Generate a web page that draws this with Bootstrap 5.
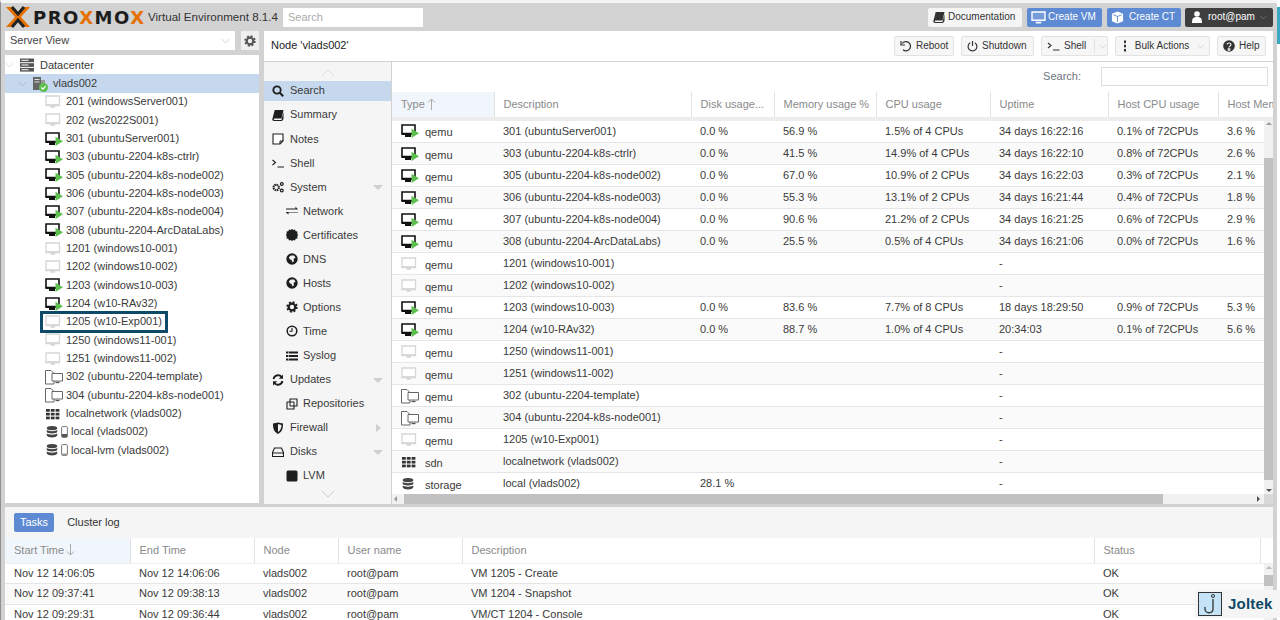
<!doctype html>
<html lang="en"><head><meta charset="utf-8"><title>Proxmox Virtual Environment</title>
<link rel="stylesheet" href="https://cdn.jsdelivr.net/npm/bootstrap@5.3.0/dist/css/bootstrap.min.css">
<style>
html,body{height:620px;overflow:hidden}
body{background:#fff;font-family:"Liberation Sans",Arial,sans-serif;font-size:11px;color:#3a3a3a;line-height:1.2}
.pg{width:1277px;height:620px;background:#d2d2d2;border-top:3px solid #f4f4f4;border-left:1px solid #8f8f8f;position:relative}
svg{flex:none}
.hdr{height:28px;padding:0 4px 0 4px;gap:5px}
.lgx{width:26px;height:22px}
.lgt{font:bold 18px "DejaVu Sans",sans-serif;letter-spacing:1.5px;color:#1d1d1d;width:115px;white-space:nowrap;overflow:hidden;margin-left:-3px}
.lgt span{color:#e57000}
.ver{font-size:11.6px;color:#333;white-space:nowrap;width:130px;margin-left:-5px}
.srch{width:140px;height:19px;border:0;border-radius:0;padding:0 5px;font-size:11px;background:#fff}
.srch::placeholder{color:#aaa}
.hb{height:19px;font-size:10px;border:0;border-radius:2px;display:inline-flex;align-items:center;white-space:nowrap;color:#fff;line-height:1;--bs-btn-hover-color:#fff}
.hb-l{background:#f5f5f5;color:#333;width:94px;padding:0 0 0 5px;gap:3px}
.hb-b{background:#5d8ad2;width:75px;padding:0 0 0 4px;gap:2px}
.hb-b2{width:74px;gap:5px;margin-right:-1px}
.hb-d{background:#3e3e3e;width:88px;padding:0 7px 0 6px;gap:5px}
.cdim{color:#bbb}.cdim2{color:#999}.cdim3{color:#ccc}.cdim4{color:#aaa}.cdim5{color:#ddd}
.side{width:254px;margin-left:4px;flex:none}
.cmb{height:19px;background:#fff;width:230px;padding:0 5px;color:#444}
.gearb{width:18px;height:19px;background:#efefef;margin-left:6px}
.tree{margin-top:5px;height:448px;background:#fff;padding-top:1px}
.tr{height:18.35px;white-space:nowrap;color:#3a3a3a}
.tr.sel{background:#c5d8ee}
.tr svg{width:18px;height:16px}
.t0{padding-left:14px;gap:5px}
.t1{padding-left:27px;gap:5px}
.t0 svg,.t1 svg{width:16px}
.t2{padding-left:40px;gap:3px}
.t2.tst{gap:2px}
.tr svg.dbi{width:14px;height:14px}
.tr svg.phi{width:7px;height:12px;margin-right:1px}
.tr svg.tog{width:9px;height:6px;margin-left:-9px;margin-right:-5px;position:relative;left:-5px}
.hlbox{outline:3px solid #0c4a68;display:inline-flex;align-items:center;gap:3px;padding:0 3px 0 2px;margin-left:-2px;height:16px}
.mn{margin-left:5px;flex:1;min-width:0;margin-right:4px}
.ttl{height:30px;background:#fff;padding:0 7px 0 7px;margin-bottom:1px;color:#222}
.tb{height:20px;border:1px solid #e2e2e2;background:#f6f6f6;color:#333;border-radius:2px;font-size:10px;padding:0 0 0 5px;display:inline-flex;align-items:center;gap:4px;white-space:nowrap;line-height:1}
.tbrow{gap:7px}
.w60{width:60px}.w73{width:73px}.w67{width:67px}.w95{width:95px}.w49{width:49px}
.sep{height:14px}
.dots{margin-left:1px}
.nv{width:127px;flex:none;background:#f5f5f5;margin-right:1px;height:442px;padding-top:17px;position:relative}
.ni{height:24.05px;padding-left:8px;white-space:nowrap;gap:6px;position:relative;color:#3a3a3a}
.ni.sub{padding-left:22px;gap:5px}
.ni svg{width:12px;height:12px;color:#1e1e1e}
.ni.on::before{content:"";position:absolute;left:0;right:0;top:2px;bottom:2px;background:#c5d8ee}
.ni>*{position:relative}
.nar{position:absolute!important;right:8px;top:10px;width:0;height:0;border:5px solid transparent;border-top:5px solid #cfcfcf;border-bottom:0}
.nar2{border:4px solid transparent;border-left:5px solid #cfcfcf;border-right:0;top:8px;right:10px}
.chv{position:absolute;left:57px;width:14px;height:8px}
.chv-t{top:7px}.chv-b{bottom:6px}
.gr{min-width:0;background:#fff;height:442px}
.gt{height:30px;padding:0 5px 0 0;gap:20px;background:#fff}
.gt .form-control{width:167px;height:19px;border:1px solid #ddd;border-radius:0;padding:0}
.tw{overflow:hidden}
.gbody{min-height:0}
.gtab{table-layout:fixed;border-collapse:collapse;margin:0;color:#3a3a3a;font-size:11px}
.gw{width:900px}
.gw col:nth-child(1){width:102px}.gw col:nth-child(2){width:197px}.gw col:nth-child(3){width:83px}.gw col:nth-child(4){width:102px}.gw col:nth-child(5){width:114px}.gw col:nth-child(6){width:118px}.gw col:nth-child(7){width:110px}.gw col:nth-child(8){width:74px}
.gb{width:100%}
.gb col:nth-child(1){width:125px}.gb col:nth-child(2){width:124px}.gb col:nth-child(3){width:84px}.gb col:nth-child(4){width:124px}.gb col:nth-child(5){width:632px}
.hg2 col:nth-child(6){width:166px}
.gtab td,.gtab th{padding:0 0 0 9px;white-space:nowrap;overflow:hidden;border:0;vertical-align:middle;background:transparent;box-shadow:none;color:inherit}
.gtab thead th{font-weight:400;color:#8a8a8a;height:25px;border-right:1px solid #e3e3e3;background:#fff}
.gtab thead th.nob{border-right:0}
.gtab th.srt{background:#f1f6fc}
.gtab tbody tr{border-bottom:1px solid #e6e6e6;background:#fff}
.gtab tbody tr:nth-child(even){background:#fafafa}
.g1 tbody tr{height:22px}
.g1 tbody td:first-child svg{width:18px;height:16px;margin-right:6px;vertical-align:-3px}
.g1 tbody td:first-child svg.dbg{width:14px;margin-right:10px}
.sa{width:9px;height:12px;vertical-align:-2px;margin-left:2px;color:#aaa}
.ghead{border-bottom:4px solid #ececec;height:29px}
.vs{width:9px;flex:none;background:#f1f1f1;position:relative}
.vth{position:absolute;left:0;right:0;background:#c1c1c1}
.vth1{top:37px;height:322px}
.vth2{top:11px;height:11px}
.sar{position:absolute;left:2px;width:0;height:0;border:3px solid transparent}
.sar-u{top:1px;border-bottom-color:#999;border-top:0}
.sar-u2{top:2px;border-bottom-color:#bbb;border-top:0}
.sar-d{bottom:2px;border-top-color:#555;border-bottom:0}
.sar-l{left:2px;top:2px;border-right-color:#999;border-left:0}
.sar-r{left:auto;right:4px;top:2px;border-left-color:#555;border-right:0}
.hs{height:10px;background:#f1f1f1;position:relative;border-right:9px solid #d8d8d8}
.hth{position:absolute;left:12px;width:759px;top:0;bottom:0;background:#c1c1c1}
.bot{margin:3px 4px 0 4px;height:113px;background:#f5f5f5}
.btabs{height:31px;padding:0 9px;gap:7px}
.bt{height:19px;padding:0 6px;background:#5d8ad2;color:#fff;border:0;border-radius:2px;font-size:11px;line-height:1}
.bt2{color:#333;background:transparent}
.hg2 thead th{height:25px;border-bottom:1px solid #eee}
.bg2{background:#fff;height:57px}
.g2 tbody tr{height:20.3px}
.wm{position:absolute;right:-3px;bottom:2px;width:85px;height:28px;background:#f5f5f5;padding-left:3px;gap:6px}
.wm svg{width:24px;height:24px}
.wm b{font-size:15px;color:#0f4a68;letter-spacing:.2px}
.teal{position:absolute;left:1276px;top:4px;width:3px;height:37px;background:#39a9c4}
</style></head><body>
<svg width="0" height="0" class="position-absolute">
<defs>
<symbol id="vr" viewBox="0 0 18 16"><path d="M1 2h13v8.500H1z" fill="#fff" stroke="#111" stroke-width="1.600"/><path d="M.500 10h14v2H.500zM4 12h6v2H4z" fill="#111"/><path d="M10.500 5.800 18 10.300l-7.500 4.600z" fill="#5cbf4e"/></symbol>
<symbol id="vo" viewBox="0 0 18 16"><path d="M1 2h13.500v9H1z" fill="#fff" stroke="#d6d6d6" stroke-width="1.300"/><path d="M.500 10.500h14.500v1.800H.500zM5.500 12h4.500v1.800H5.500z" fill="#d6d6d6"/></symbol>
<symbol id="vt" viewBox="0 0 18 16"><path d="M.500 1.500h5.500L9 4.500V15H.500z" fill="#fff" stroke="#666" stroke-width="1"/><path d="M7 4.500h10.500v7.500H7z" fill="#fff" stroke="#666" stroke-width="1"/><path d="M10.500 13.500h4" stroke="#555" stroke-width="1.300"/></symbol>
<symbol id="sd" viewBox="0 0 18 16"><g fill="#333"><rect x="1" y="3" width="3.800" height="2.700"/><rect x="5.800" y="3" width="3.800" height="2.700"/><rect x="10.600" y="3" width="3.800" height="2.700"/><rect x="1" y="6.800" width="3.800" height="2.700"/><rect x="5.800" y="6.800" width="3.800" height="2.700"/><rect x="10.600" y="6.800" width="3.800" height="2.700"/><rect x="1" y="10.600" width="3.800" height="2.700"/><rect x="5.800" y="10.600" width="3.800" height="2.700"/><rect x="10.600" y="10.600" width="3.800" height="2.700"/></g></symbol>
<symbol id="db" viewBox="0 0 16 16"><g fill="#444"><ellipse cx="8" cy="3.500" rx="6" ry="2.500"/><path d="M2 5.500c1.500 2.200 10.500 2.200 12 0v2.500c-1.500 2.200-10.500 2.200-12 0zM2 9.500c1.500 2.200 10.500 2.200 12 0V12c-1 3-11 3-12 0z"/></g></symbol>
<symbol id="ph" viewBox="0 0 7 12"><rect x=".6" y=".6" width="5.800" height="10.800" rx="1" fill="#fff" stroke="#777"/><path d="M1 8h5v3H1z" fill="#555"/></symbol>
<symbol id="ph2" viewBox="0 0 7 12"><rect x=".6" y=".6" width="5.800" height="10.800" rx="1" fill="#fff" stroke="#777"/><path d="M1 9.500h5V11H1z" fill="#999"/></symbol>
<symbol id="dc" viewBox="0 0 16 16"><g fill="#555"><rect x="1" y="1.500" width="14" height="3.700"/><rect x="1" y="6.200" width="14" height="3.700"/><rect x="1" y="10.900" width="14" height="3.700"/></g><g fill="#fff"><rect x="2.500" y="2.800" width="7" height="1"/><rect x="2.500" y="7.500" width="7" height="1"/><rect x="2.500" y="12.200" width="7" height="1"/></g></symbol>
<symbol id="nd" viewBox="0 0 16 16"><path d="M1 1h8v13H1z" fill="#666"/><path d="M9 4h4v7H9z" fill="#999"/><path d="M2.500 3h5v1h-5zM2.500 5.500h5v1h-5z" fill="#ddd"/><circle cx="11.500" cy="11.500" r="4.500" fill="#5cbf4e"/><path d="m9.300 11.500 1.600 1.600 2.700-2.900" fill="none" stroke="#fff" stroke-width="1.200"/></symbol>
<symbol id="ch" viewBox="0 0 14 8"><path d="M1 1l6 6 6-6" fill="none" stroke="currentColor" stroke-width="1"/></symbol>
<symbol id="cu" viewBox="0 0 14 8"><path d="M1 7l6-6 6 6" fill="none" stroke="currentColor" stroke-width="1"/></symbol>
<symbol id="ar" viewBox="0 0 9 12"><path d="M4.500 12V1M1 4.500 4.500 1 8 4.500" fill="none" stroke="currentColor"/></symbol>
<symbol id="ard" viewBox="0 0 9 12"><path d="M4.500 0v11M1 7.500 4.500 11 8 7.500" fill="none" stroke="currentColor"/></symbol>
<symbol id="is" viewBox="0 0 12 12"><circle cx="5" cy="5" r="3.700" fill="none" stroke="currentColor" stroke-width="1.800"/><path d="m7.800 7.800 3.400 3.400" stroke="currentColor" stroke-width="2"/></symbol>
<symbol id="ib" viewBox="0 0 12 12"><path d="M2.700 1H11.500L9.500 9.500H2.500C1.500 9.500 1.500 11 2.500 11H9.500L11.500 3v7L10 12H2C.5 12 0 10.500.5 9.500z" fill="currentColor"/></symbol>
<symbol id="in" viewBox="0 0 12 12"><path d="M1 1h10v7l-3 3H1z" fill="#fff" stroke="currentColor" stroke-width="1.100"/><path d="M8 11V8h3" fill="none" stroke="currentColor"/></symbol>
<symbol id="ish" viewBox="0 0 12 12"><path d="M.5 3l3 2.500-3 2.500M5.500 10H12" fill="none" stroke="currentColor" stroke-width="1.100"/></symbol>
<symbol id="ics" viewBox="0 0 12 12"><circle cx="4.200" cy="6.500" r="2.700" fill="none" stroke="currentColor" stroke-width="2" stroke-dasharray="1.500 .6"/><circle cx="9.800" cy="3" r="1.400" fill="none" stroke="currentColor" stroke-width="1.200"/><circle cx="9.800" cy="9.500" r="1.400" fill="none" stroke="currentColor" stroke-width="1.200"/></symbol>
<symbol id="ix" viewBox="0 0 12 12"><path d="M0 3.500h9.500V1.500L12 4.500H0zM12 7.500H2.500v2L0 7.500V7h12z" fill="currentColor"/></symbol>
<symbol id="ic" viewBox="0 0 12 12"><path d="M6 0l1.400 1.100L9 .6l.7 1.700 1.800.3-.2 1.800L12 6l-.7 1.600.2 1.800-1.800.3L9 11.400l-1.600-.5L6 12l-1.400-1.100-1.600.5-.7-1.700-1.800-.3.2-1.800L0 6l.7-1.600L.5 2.600l1.800-.3L3 .6l1.600.5z" fill="currentColor"/></symbol>
<symbol id="ig" viewBox="0 0 12 12"><circle cx="6" cy="6" r="5.700" fill="currentColor"/><path d="M5 2.500h3l1.500 2L7.500 6 8 8 6.500 9.500 5.500 7 3.500 6 3 4z" fill="#f5f5f5"/></symbol>
<symbol id="io" viewBox="0 0 12 12"><circle cx="6" cy="6" r="3.300" fill="none" stroke="currentColor" stroke-width="2.200"/><circle cx="6" cy="6" r="4.800" fill="none" stroke="currentColor" stroke-width="1.800" stroke-dasharray="2 1.770"/></symbol>
<symbol id="it" viewBox="0 0 12 12"><circle cx="6" cy="6" r="4.800" fill="none" stroke="currentColor" stroke-width="1.500"/><path d="M6 3v3.300H3.500" fill="none" stroke="currentColor" stroke-width="1.100"/></symbol>
<symbol id="il" viewBox="0 0 12 12"><path d="M0 1.500h12v2H0zM0 5h12v2H0zM0 8.500h12v2H0z" fill="currentColor"/><path d="M2.500 1.500v9" stroke="#f5f5f5" stroke-width=".6"/></symbol>
<symbol id="iu" viewBox="0 0 12 12"><path d="M1.500 5A4.700 4.700 0 0 1 9.700 3M10.500 7A4.700 4.700 0 0 1 2.300 9" fill="none" stroke="currentColor" stroke-width="1.900"/><path d="M11 .6v4.200H6.800zM1 11.400V7.200h4.200z" fill="currentColor"/></symbol>
<symbol id="ir" viewBox="0 0 12 12"><path d="M1 4h3V1h7v7H8v3H1z" fill="none" stroke="currentColor" stroke-width="1.100" stroke-linejoin="round"/><path d="M4 4h4v4H4z" fill="none" stroke="currentColor"/></symbol>
<symbol id="if" viewBox="0 0 12 12"><path d="M1 1.500 6 .5l5 1c0 5-.7 8-5 10.500C1.700 9.500 1 6.500 1 1.500z" fill="currentColor"/><path d="M6 2v8c2.500-1.600 3.400-3.800 3.500-7z" fill="#f5f5f5"/></symbol>
<symbol id="id" viewBox="0 0 12 12"><path d="M2.500 2h7L11.500 6.500V10.500H.5V6.500zM.5 7h11" fill="none" stroke="currentColor" stroke-width="1.100"/></symbol>
<symbol id="iq" viewBox="0 0 12 12"><rect x="0.500" y="0.500" width="11" height="11" rx="1.500" fill="currentColor"/></symbol>
<symbol id="irb" viewBox="0 0 12 12"><path d="M2.200 3.500A4.600 4.600 0 1 1 3 9.800" fill="none" stroke="currentColor" stroke-width="1.200"/><path d="M1 1v4h4" fill="none" stroke="currentColor" stroke-width="1.200"/></symbol>
<symbol id="ipw" viewBox="0 0 12 12"><path d="M3.500 2.500a4.800 4.800 0 1 0 5 0M6 .5V6" fill="none" stroke="currentColor" stroke-width="1.300"/></symbol>
<symbol id="idots" viewBox="0 0 4 12"><g fill="currentColor"><rect x="1" y="0.500" width="2" height="2.600"/><rect x="1" y="4.700" width="2" height="2.600"/><rect x="1" y="8.900" width="2" height="2.600"/></g></symbol>
<symbol id="ihl" viewBox="0 0 12 12"><circle cx="6" cy="6" r="5.800" fill="currentColor"/><path d="M4 4.500C4 2.500 8 2.500 8 4.500 8 6 6 6 6 7.500M5.200 8.700h1.600v1.500H5.200z" fill="none" stroke="#f6f6f6" stroke-width="1.100"/></symbol>
<symbol id="imon" viewBox="0 0 16 14"><path d="M1 1h14v9H1z" fill="#fff" fill-opacity=".15" stroke="currentColor" stroke-width="1.500"/><path d="M5 12.500h6" stroke="currentColor" stroke-width="1.800"/></symbol>
<symbol id="icube" viewBox="0 0 14 14"><path d="M7 .5l6 2.500v8L7 13.500 1 11V3z" fill="currentColor"/><path d="M2.500 4 7 6v6" fill="none" stroke="#5d8ad2"/><path d="M7 6l4.500-2" stroke="#5d8ad2"/></symbol>
<symbol id="iusr" viewBox="0 0 12 12"><circle cx="6" cy="3" r="2.800" fill="currentColor"/><path d="M1 12c0-4.500 1-6 5-6s5 1.500 5 6z" fill="currentColor"/></symbol>
<symbol id="igr" viewBox="0 0 12 12"><circle cx="6" cy="6" r="3.300" fill="none" stroke="#555" stroke-width="2.200"/><circle cx="6" cy="6" r="4.800" fill="none" stroke="#555" stroke-width="1.800" stroke-dasharray="2 1.770"/></symbol>
</defs></svg>
<div class="pg d-flex flex-column">
<header class="hdr d-flex align-items-center">
<svg class="lgx" viewBox="0 0 26 22"><path d="M1 1h6l6 7 6-7h6l-9 10 9 10h-6l-6-7-6 7H1l9-10z" fill="#e57000"/><path d="M7 1l6 7 6-7M7 21l6-7 6 7" fill="none" stroke="#222" stroke-width="3"/></svg>
<div class="lgt">PRO<span>X</span>MO<span>X</span></div>
<div class="ver">Virtual Environment 8.1.4</div>
<input class="form-control srch" placeholder="Search" aria-label="Search">
<div class="flex-grow-1"></div>
<button class="btn hb hb-l"><svg width="12" height="12"><use href="#ib"/></svg>Documentation</button>
<button class="btn hb hb-b"><svg width="15" height="13"><use href="#imon"/></svg>Create VM</button>
<button class="btn hb hb-b hb-b2"><svg width="13" height="13"><use href="#icube"/></svg>Create CT</button>
<button class="btn hb hb-d"><svg width="12" height="12"><use href="#iusr"/></svg>root@pam<svg width="7" height="5" class="ms-auto cdim2"><use href="#ch"/></svg></button>
</header>
<div class="d-flex flex-grow-0">
<aside class="side">
<div class="d-flex"><div class="cmb d-flex align-items-center justify-content-between">Server View<svg width="9" height="6" class="cdim"><use href="#ch"/></svg></div><div class="gearb d-flex align-items-center justify-content-center"><svg width="12" height="12"><use href="#igr"/></svg></div></div>
<div class="tree">
<div class="tr t0 d-flex align-items-center"><svg class="tog cdim3"><use href="#ch"/></svg><svg><use href="#dc"/></svg>Datacenter</div>
<div class="tr t1 sel d-flex align-items-center"><svg class="tog cdim4"><use href="#ch"/></svg><svg><use href="#nd"/></svg>vlads002</div>
<div class="tr t2 d-flex align-items-center"><svg><use href="#vo"/></svg>201 (windowsServer001)</div>
<div class="tr t2 d-flex align-items-center"><svg><use href="#vo"/></svg>202 (ws2022S001)</div>
<div class="tr t2 d-flex align-items-center"><svg><use href="#vr"/></svg>301 (ubuntuServer001)</div>
<div class="tr t2 d-flex align-items-center"><svg><use href="#vr"/></svg>303 (ubuntu-2204-k8s-ctrlr)</div>
<div class="tr t2 d-flex align-items-center"><svg><use href="#vr"/></svg>305 (ubuntu-2204-k8s-node002)</div>
<div class="tr t2 d-flex align-items-center"><svg><use href="#vr"/></svg>306 (ubuntu-2204-k8s-node003)</div>
<div class="tr t2 d-flex align-items-center"><svg><use href="#vr"/></svg>307 (ubuntu-2204-k8s-node004)</div>
<div class="tr t2 d-flex align-items-center"><svg><use href="#vr"/></svg>308 (ubuntu-2204-ArcDataLabs)</div>
<div class="tr t2 d-flex align-items-center"><svg><use href="#vo"/></svg>1201 (windows10-001)</div>
<div class="tr t2 d-flex align-items-center"><svg><use href="#vo"/></svg>1202 (windows10-002)</div>
<div class="tr t2 d-flex align-items-center"><svg><use href="#vr"/></svg>1203 (windows10-003)</div>
<div class="tr t2 d-flex align-items-center"><svg><use href="#vr"/></svg>1204 (w10-RAv32)</div>
<div class="tr t2 d-flex align-items-center"><span class="hlbox"><svg><use href="#vo"/></svg>1205 (w10-Exp001)</span></div>
<div class="tr t2 d-flex align-items-center"><svg><use href="#vo"/></svg>1250 (windows11-001)</div>
<div class="tr t2 d-flex align-items-center"><svg><use href="#vo"/></svg>1251 (windows11-002)</div>
<div class="tr t2 d-flex align-items-center"><svg><use href="#vt"/></svg>302 (ubuntu-2204-template)</div>
<div class="tr t2 d-flex align-items-center"><svg><use href="#vt"/></svg>304 (ubuntu-2204-k8s-node001)</div>
<div class="tr t2 d-flex align-items-center"><svg><use href="#sd"/></svg>localnetwork (vlads002)</div>
<div class="tr t2 tst d-flex align-items-center"><svg class="dbi"><use href="#db"/></svg><svg class="phi"><use href="#ph"/></svg>local (vlads002)</div>
<div class="tr t2 tst d-flex align-items-center"><svg class="dbi"><use href="#db"/></svg><svg class="phi"><use href="#ph2"/></svg>local-lvm (vlads002)</div>
</div>
</aside>
<main class="mn">
<div class="ttl d-flex align-items-center"><span class="flex-grow-1">Node 'vlads002'</span>
<div class="d-flex tbrow">
<button class="btn tb w60"><svg width="12" height="12"><use href="#irb"/></svg>Reboot</button>
<button class="btn tb w73"><svg width="11" height="12"><use href="#ipw"/></svg>Shutdown</button>
<button class="btn tb w67"><svg width="13" height="12"><use href="#ish"/></svg>Shell<span class="border-start ms-1 sep"></span><svg width="7" height="5" class="cdim"><use href="#ch"/></svg></button>
<button class="btn tb w95"><svg width="6" height="12" class="dots"><use href="#idots"/></svg>&nbsp;Bulk Actions<svg width="7" height="5" class="ms-1 cdim"><use href="#ch"/></svg></button>
<button class="btn tb w49"><svg width="12" height="12"><use href="#ihl"/></svg>Help</button>
</div></div>
<div class="d-flex">
<nav class="nv">
<svg class="chv chv-t cdim5"><use href="#cu"/></svg>
<div class="ni on d-flex align-items-center"><svg><use href="#is"/></svg><span>Search</span></div>
<div class="ni d-flex align-items-center"><svg><use href="#ib"/></svg><span>Summary</span></div>
<div class="ni d-flex align-items-center"><svg><use href="#in"/></svg><span>Notes</span></div>
<div class="ni d-flex align-items-center"><svg><use href="#ish"/></svg><span>Shell</span></div>
<div class="ni d-flex align-items-center"><svg><use href="#ics"/></svg><span>System</span><i class="nar"></i></div>
<div class="ni sub d-flex align-items-center"><svg><use href="#ix"/></svg><span>Network</span></div>
<div class="ni sub d-flex align-items-center"><svg><use href="#ic"/></svg><span>Certificates</span></div>
<div class="ni sub d-flex align-items-center"><svg><use href="#ig"/></svg><span>DNS</span></div>
<div class="ni sub d-flex align-items-center"><svg><use href="#ig"/></svg><span>Hosts</span></div>
<div class="ni sub d-flex align-items-center"><svg><use href="#io"/></svg><span>Options</span></div>
<div class="ni sub d-flex align-items-center"><svg><use href="#it"/></svg><span>Time</span></div>
<div class="ni sub d-flex align-items-center"><svg><use href="#il"/></svg><span>Syslog</span></div>
<div class="ni d-flex align-items-center"><svg><use href="#iu"/></svg><span>Updates</span><i class="nar"></i></div>
<div class="ni sub d-flex align-items-center"><svg><use href="#ir"/></svg><span>Repositories</span></div>
<div class="ni d-flex align-items-center"><svg><use href="#if"/></svg><span>Firewall</span><i class="nar nar2"></i></div>
<div class="ni d-flex align-items-center"><svg><use href="#id"/></svg><span>Disks</span><i class="nar"></i></div>
<div class="ni sub d-flex align-items-center"><svg><use href="#iq"/></svg><span>LVM</span></div>
<svg class="chv chv-b cdim3"><use href="#ch"/></svg>
</nav>
<section class="gr flex-grow-1 d-flex flex-column">
<div class="gt d-flex align-items-center justify-content-end"><span class="text-secondary">Search:</span><input class="form-control" aria-label="Search"></div>
<div class="tw ghead"><table class="table gtab gw"><colgroup><col><col><col><col><col><col><col><col></colgroup><thead><tr><th class="srt">Type<svg class="sa"><use href="#ar"/></svg></th><th>Description</th><th>Disk usage...</th><th>Memory usage %</th><th>CPU usage</th><th>Uptime</th><th>Host CPU usage</th><th>Host Memory</th></tr></thead></table></div>
<div class="d-flex flex-grow-1 gbody">
<div class="tw flex-grow-1"><table class="table gtab gw g1"><colgroup><col><col><col><col><col><col><col><col></colgroup><tbody>
<tr><td><svg><use href="#vr"/></svg>qemu</td><td>301 (ubuntuServer001)</td><td>0.0 %</td><td>56.9 %</td><td>1.5% of 4 CPUs</td><td>34 days 16:22:16</td><td>0.1% of 72CPUs</td><td>3.6 %</td></tr>
<tr><td><svg><use href="#vr"/></svg>qemu</td><td>303 (ubuntu-2204-k8s-ctrlr)</td><td>0.0 %</td><td>41.5 %</td><td>14.9% of 4 CPUs</td><td>34 days 16:22:10</td><td>0.8% of 72CPUs</td><td>2.6 %</td></tr>
<tr><td><svg><use href="#vr"/></svg>qemu</td><td>305 (ubuntu-2204-k8s-node002)</td><td>0.0 %</td><td>67.0 %</td><td>10.9% of 2 CPUs</td><td>34 days 16:22:03</td><td>0.3% of 72CPUs</td><td>2.1 %</td></tr>
<tr><td><svg><use href="#vr"/></svg>qemu</td><td>306 (ubuntu-2204-k8s-node003)</td><td>0.0 %</td><td>55.3 %</td><td>13.1% of 2 CPUs</td><td>34 days 16:21:44</td><td>0.4% of 72CPUs</td><td>1.8 %</td></tr>
<tr><td><svg><use href="#vr"/></svg>qemu</td><td>307 (ubuntu-2204-k8s-node004)</td><td>0.0 %</td><td>90.6 %</td><td>21.2% of 2 CPUs</td><td>34 days 16:21:25</td><td>0.6% of 72CPUs</td><td>2.9 %</td></tr>
<tr><td><svg><use href="#vr"/></svg>qemu</td><td>308 (ubuntu-2204-ArcDataLabs)</td><td>0.0 %</td><td>25.5 %</td><td>0.5% of 4 CPUs</td><td>34 days 16:21:06</td><td>0.0% of 72CPUs</td><td>1.6 %</td></tr>
<tr><td><svg><use href="#vo"/></svg>qemu</td><td>1201 (windows10-001)</td><td></td><td></td><td></td><td>-</td><td></td><td></td></tr>
<tr><td><svg><use href="#vo"/></svg>qemu</td><td>1202 (windows10-002)</td><td></td><td></td><td></td><td>-</td><td></td><td></td></tr>
<tr><td><svg><use href="#vr"/></svg>qemu</td><td>1203 (windows10-003)</td><td>0.0 %</td><td>83.6 %</td><td>7.7% of 8 CPUs</td><td>18 days 18:29:50</td><td>0.9% of 72CPUs</td><td>5.3 %</td></tr>
<tr><td><svg><use href="#vr"/></svg>qemu</td><td>1204 (w10-RAv32)</td><td>0.0 %</td><td>88.7 %</td><td>1.0% of 4 CPUs</td><td>20:34:03</td><td>0.1% of 72CPUs</td><td>5.6 %</td></tr>
<tr><td><svg><use href="#vo"/></svg>qemu</td><td>1250 (windows11-001)</td><td></td><td></td><td></td><td>-</td><td></td><td></td></tr>
<tr><td><svg><use href="#vo"/></svg>qemu</td><td>1251 (windows11-002)</td><td></td><td></td><td></td><td>-</td><td></td><td></td></tr>
<tr><td><svg><use href="#vt"/></svg>qemu</td><td>302 (ubuntu-2204-template)</td><td></td><td></td><td></td><td>-</td><td></td><td></td></tr>
<tr><td><svg><use href="#vt"/></svg>qemu</td><td>304 (ubuntu-2204-k8s-node001)</td><td></td><td></td><td></td><td>-</td><td></td><td></td></tr>
<tr><td><svg><use href="#vo"/></svg>qemu</td><td>1205 (w10-Exp001)</td><td></td><td></td><td></td><td>-</td><td></td><td></td></tr>
<tr><td><svg><use href="#sd"/></svg>sdn</td><td>localnetwork (vlads002)</td><td></td><td></td><td></td><td>-</td><td></td><td></td></tr>
<tr><td><svg class="dbg"><use href="#db"/></svg>storage</td><td>local (vlads002)</td><td>28.1 %</td><td></td><td></td><td>-</td><td></td><td></td></tr>
</tbody></table></div>
<div class="vs"><i class="sar sar-u"></i><div class="vth vth1"></div><i class="sar sar-d"></i></div>
</div>
<div class="hs"><i class="sar sar-l"></i><div class="hth"></div><i class="sar sar-r"></i></div>
</section>
</div>
</main>
</div>
<section class="bot">
<div class="btabs d-flex align-items-center"><button class="btn bt">Tasks</button><button class="btn bt bt2">Cluster log</button></div>
<div class="tw"><table class="table gtab gb hg2 mb-0"><colgroup><col><col><col><col><col><col><col></colgroup><thead><tr><th class="srt">Start Time<svg class="sa"><use href="#ard"/></svg></th><th>End Time</th><th>Node</th><th>User name</th><th>Description</th><th>Status</th><th class="nob"></th></tr></thead></table></div>
<div class="d-flex bg2"><div class="tw flex-grow-1"><table class="table gtab gb g2 mb-0"><colgroup><col><col><col><col><col><col></colgroup><tbody>
<tr><td>Nov 12 14:06:05</td><td>Nov 12 14:06:06</td><td>vlads002</td><td>root@pam</td><td>VM 1205 - Create</td><td>OK</td></tr>
<tr><td>Nov 12 09:37:41</td><td>Nov 12 09:38:13</td><td>vlads002</td><td>root@pam</td><td>VM 1204 - Snapshot</td><td>OK</td></tr>
<tr><td>Nov 12 09:29:31</td><td>Nov 12 09:36:44</td><td>vlads002</td><td>root@pam</td><td>VM/CT 1204 - Console</td><td>OK</td></tr>
</tbody></table></div><div class="vs"><i class="sar sar-u2"></i><div class="vth vth2"></div></div></div>
</section>
<div class="wm d-flex align-items-center"><svg viewBox="0 0 24 24"><rect x=".5" y=".5" width="23" height="23" fill="#c4e3f7" stroke="#333"/><circle cx="15" cy="4" r="1.500" fill="none" stroke="#333"/><path d="M15 7v10c0 5-8 5-8 0v-2" fill="none" stroke="#333" stroke-width="1.300"/></svg><b>Joltek</b></div>
<i class="teal"></i>
</div>
</body></html>
